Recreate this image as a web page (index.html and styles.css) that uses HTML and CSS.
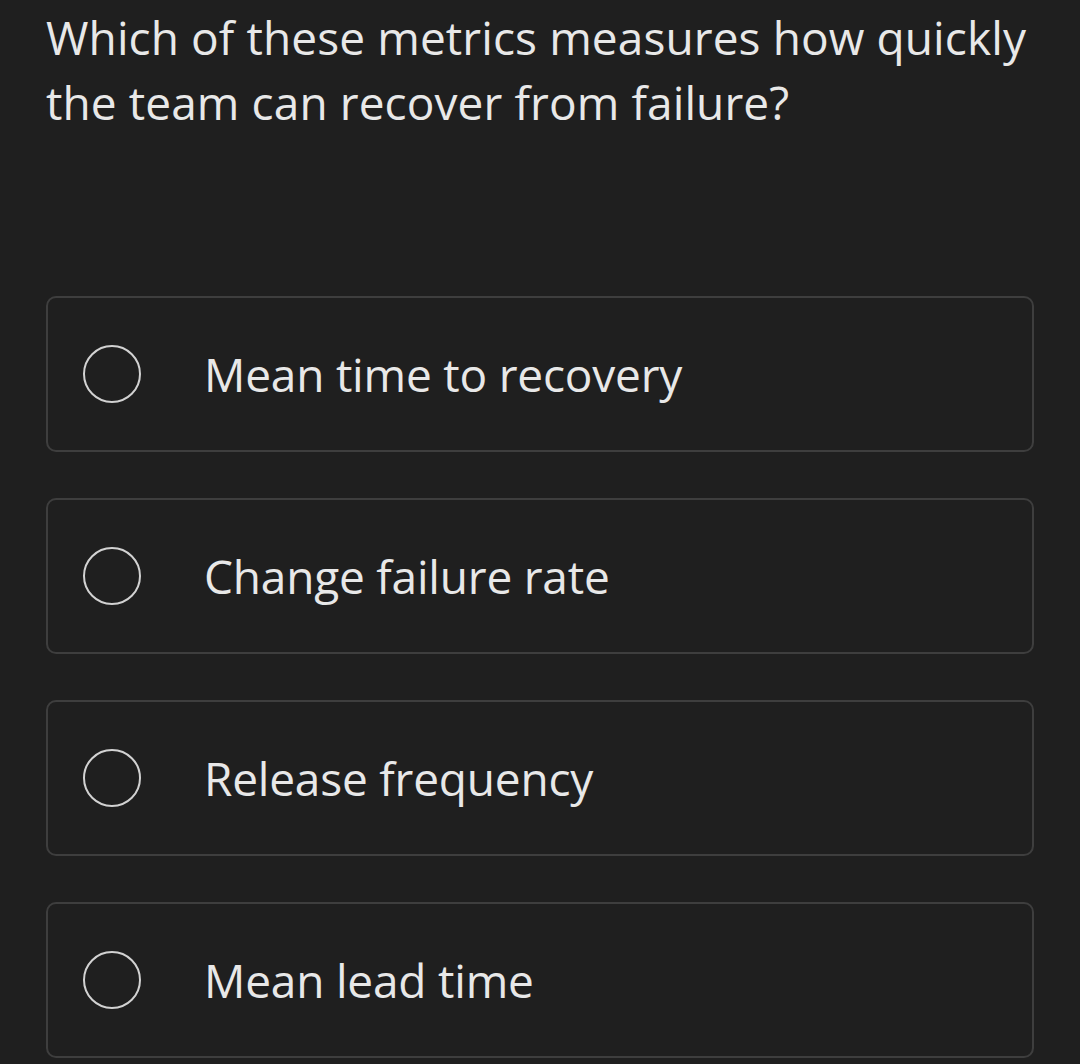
FILE: index.html
```html
<!DOCTYPE html>
<html lang="en">
<head>
<meta charset="utf-8">
<title>Quiz</title>
<link rel="stylesheet" href="styles.css">
</head>
<body>
<main class="quiz">
  <h1 class="question">Which of these metrics measures how quickly the team can recover from failure?</h1>
  <ul class="options">
    <li class="option"><span class="radio"></span><span class="label">Mean time to recovery</span></li>
    <li class="option"><span class="radio"></span><span class="label">Change failure rate</span></li>
    <li class="option"><span class="radio"></span><span class="label">Release frequency</span></li>
    <li class="option"><span class="radio"></span><span class="label">Mean lead time</span></li>
  </ul>
</main>
</body>
</html>
```
FILE: styles.css
```css
html, body {
  margin: 0;
  padding: 0;
  background: #1f1f1f;
}
body {
  font-family: "Open Sans", "Noto Sans", sans-serif;
  color: #e8e8e8;
}
.quiz {
  padding: 0 46px;
}
.question {
  margin: 0;
  padding-top: 5px;
  font-size: 46px;
  font-weight: 400;
  line-height: 65px;
  letter-spacing: 0.1px;
  height: 251px;
}
.options {
  list-style: none;
  margin: 40px 0 0;
  padding: 0;
  display: flex;
  flex-direction: column;
  gap: 46px;
}
.option {
  box-sizing: border-box;
  height: 156px;
  border: 2px solid #3e3e3e;
  border-radius: 10px;
  display: flex;
  align-items: center;
  padding-left: 35px;
}
.radio {
  box-sizing: border-box;
  width: 58px;
  height: 58px;
  border: 2px solid #d2d2d2;
  border-radius: 50%;
  flex: none;
}
.label {
  margin-left: 63px;
  font-size: 46px;
  letter-spacing: -0.2px;
}
```
